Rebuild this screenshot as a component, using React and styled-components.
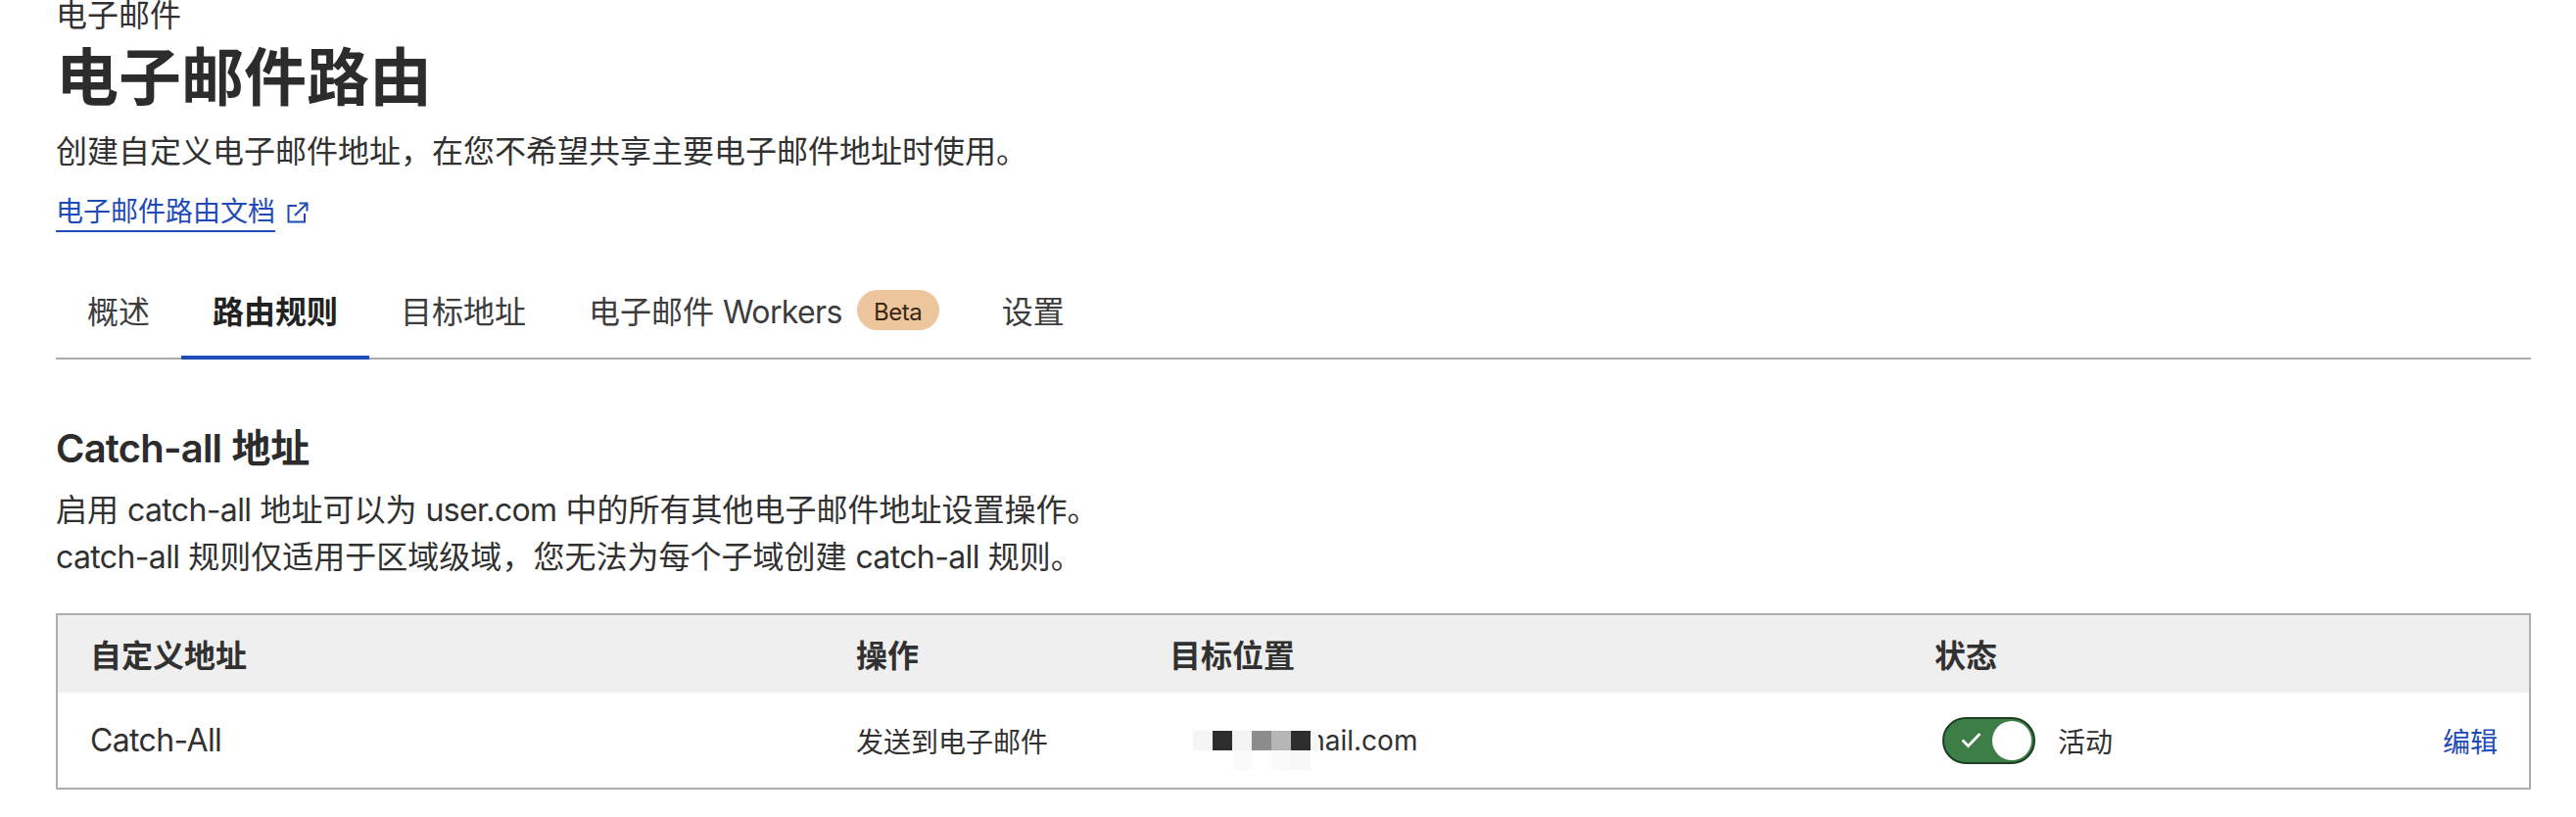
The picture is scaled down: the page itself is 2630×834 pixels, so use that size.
import React from 'react';
import styled, { createGlobalStyle } from 'styled-components';

const GlobalStyle = createGlobalStyle`
  html, body {
    margin: 0;
    padding: 0;
    background: #ffffff;
    color: #313131;
    font-family: Inter, 'Noto Sans CJK SC', sans-serif;
    overflow: hidden;
  }
`;

const COMMA = '\uFF0C';

const Page = styled.div`
  display: flex;
  flex-flow: column;
  width: 2527px;
  margin-left: 57px;
  margin-top: -10px;
`;

const Latin = styled.span`
  letter-spacing: -0.02em;
`;

const Crumb = styled.div`
  font-size: 32px;
  line-height: 51px;
`;

const Title = styled.h1`
  margin: 0;
  font-size: 64px;
  line-height: 76px;
  font-weight: 700;
  color: #2c2c2c;
`;

const Lead = styled.p`
  margin: 14px 0 0;
  font-size: 32px;
  line-height: 48px;
`;

const DocRow = styled.div`
  display: flex;
  align-items: center;
  gap: 12px;
  margin-top: 16px;
  height: 44px;
`;

const DocLink = styled.a`
  font-size: 28px;
  line-height: 38px;
  color: #1f4bb8;
  border-bottom: 2px solid #1f4bb8;
  text-decoration: none;
`;

const Tabs = styled.div`
  display: flex;
  align-items: flex-end;
  height: 98px;
  margin-top: 28px;
  border-bottom: 2px solid #ababab;
`;

const Tab = styled.div`
  display: flex;
  align-items: center;
  gap: 15px;
  height: 98px;
  padding: 0 32px;
  box-sizing: border-box;
  font-size: 32px;
  font-weight: ${(p) => (p.$active ? 600 : 400)};
  color: ${(p) => (p.$active ? '#222222' : '#3c3c3c')};
  border-bottom: 4px solid ${(p) => (p.$active ? '#1f4bb8' : 'transparent')};
  margin-bottom: -2px;
`;

const Badge = styled.span`
  display: inline-flex;
  align-items: center;
  justify-content: center;
  width: 84px;
  height: 41px;
  box-sizing: border-box;
  padding-top: 4px;
  border-radius: 21px;
  background: #eec69d;
  color: #3a2614;
  font-size: 24px;
`;

const SectionTitle = styled.h2`
  margin: 67px 0 0;
  font-size: 40px;
  line-height: 48px;
  font-weight: 600;
  color: #2c2c2c;
`;

const Description = styled.p`
  margin: 15px 0 0;
  font-size: 32px;
  line-height: 48px;
`;

const Table = styled.div`
  margin-top: 33px;
  border: 2px solid #adadad;
`;

const Row = styled.div`
  display: grid;
  grid-template-columns: 782px 320px 781px 1fr auto;
  align-items: center;
  box-sizing: border-box;
  padding: ${(p) => (p.$head ? '0 32px 2px 33px' : '0 32px 0 33px')};
  height: ${(p) => (p.$head ? '79px' : '97px')};
  background: ${(p) => (p.$head ? '#efefef' : '#ffffff')};
  font-size: ${(p) => (p.$head ? '32px' : '28px')};
  font-weight: ${(p) => (p.$head ? 600 : 400)};
`;

const NameCell = styled.div`
  font-size: 32px;
`;

const TargetCell = styled.div`
  position: relative;
  font-size: 28px;
  padding-left: 90px;
`;

const Mosaic = styled.div`
  position: absolute;
  left: 24px;
  top: 7px;
  display: grid;
  grid-template-columns: repeat(6, 20px) 8px;
  grid-auto-rows: 20px;
`;

const Pixel = styled.span`
  background: ${(p) => p.$c};
`;

const StatusCell = styled.div`
  display: flex;
  align-items: center;
  gap: 23px;
  margin-left: 8px;
`;

const Toggle = styled.div`
  display: flex;
  align-items: center;
  justify-content: space-between;
  width: 95px;
  height: 48px;
  box-sizing: border-box;
  padding: 0 2px 0 17px;
  border: 2px solid #1c3f22;
  border-radius: 24px;
  background: #3d7d46;
`;

const Knob = styled.span`
  width: 40px;
  height: 40px;
  border-radius: 50%;
  background: #ffffff;
`;

const EditLink = styled.a`
  color: #1f4bb8;
  text-decoration: none;
`;

const mosaicCells = [
  '#f5f5f5', '#2e2e2e', '#f3f3f3', '#8c8c8c', '#b6b6b6', '#2e2e2e', '#f5f5f5',
  '#ffffff', '#ffffff', '#fafafa', '#ffffff', '#fafafa', '#f8f8f8', '#ffffff',
];

export default function App() {
  return (
    <>
      <GlobalStyle />
      <Page>
        <Crumb>电子邮件</Crumb>
        <Title>电子邮件路由</Title>
        <Lead>创建自定义电子邮件地址{COMMA}在您不希望共享主要电子邮件地址时使用。</Lead>
        <DocRow>
          <DocLink>电子邮件路由文档</DocLink>
          <svg width="22" height="22" viewBox="0 0 22 22" fill="none" stroke="#1f4bb8" strokeWidth="2">
            <path d="M10 4H1.5v16.5H18V12" />
            <path d="M8 14L20 2M12.5 1.5H20.5V9.5" />
          </svg>
        </DocRow>
        <Tabs>
          <Tab>概述</Tab>
          <Tab $active>路由规则</Tab>
          <Tab>目标地址</Tab>
          <Tab>
            <span>
              电子邮件 <Latin>Workers</Latin>
            </span>
            <Badge>
              <Latin>Beta</Latin>
            </Badge>
          </Tab>
          <Tab>设置</Tab>
        </Tabs>
        <SectionTitle>
          <Latin>Catch-all</Latin> 地址
        </SectionTitle>
        <Description>
          启用 <Latin>catch-all</Latin> 地址可以为 <Latin>user.com</Latin> 中的所有其他电子邮件地址设置操作。
          <br />
          <Latin>catch-all</Latin> 规则仅适用于区域级域{COMMA}您无法为每个子域创建 <Latin>catch-all</Latin> 规则。
        </Description>
        <Table>
          <Row $head>
            <div>自定义地址</div>
            <div>操作</div>
            <div>目标位置</div>
            <div>状态</div>
            <div />
          </Row>
          <Row>
            <NameCell>
              <Latin>Catch-All</Latin>
            </NameCell>
            <div>发送到电子邮件</div>
            <TargetCell>
              @gmail.com
              <Mosaic>
                {mosaicCells.map((c, i) => (
                  <Pixel key={i} $c={c} />
                ))}
              </Mosaic>
            </TargetCell>
            <StatusCell>
              <Toggle>
                <svg width="21" height="17" viewBox="0 0 21 17" fill="none" stroke="#ffffff" strokeWidth="2.8">
                  <path d="M1.5 8.5L7.5 14.5L19.5 2" />
                </svg>
                <Knob />
              </Toggle>
              活动
            </StatusCell>
            <EditLink>编辑</EditLink>
          </Row>
        </Table>
      </Page>
    </>
  );
}
